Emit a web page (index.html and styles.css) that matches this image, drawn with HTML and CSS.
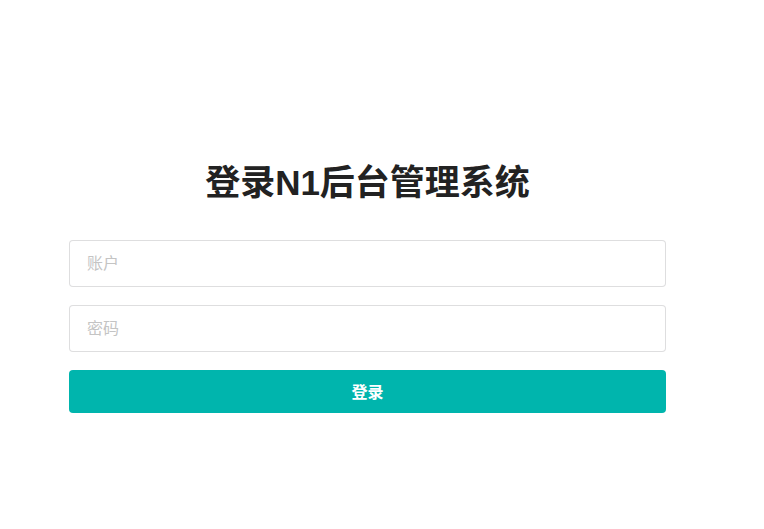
FILE: index.html
```html
<!DOCTYPE html>
<html lang="zh-CN">
<head>
  <meta charset="UTF-8" />
  <title>登录N1后台管理系统</title>
  <link rel="stylesheet" href="styles.css">
</head>
<body>
  <div class="login-box">
    <h1 class="login-title">登录N1后台管理系统</h1>
    <form class="login-form">
      <input class="field" type="text" placeholder="账户">
      <input class="field" type="password" placeholder="密码">
      <button class="submit" type="button">登录</button>
    </form>
  </div>
</body>
</html>
```

FILE: styles.css
```css
body {
  margin: 0;
  background: #fff;
  font-family: "Liberation Sans", "Noto Sans CJK SC", sans-serif;
}

.login-box {
  width: 597px;
  margin-left: 69px;
  padding-top: 160px;
}

.login-title {
  margin: 0 0 34px;
  font-size: 35px;
  line-height: 46px;
  font-weight: bold;
  text-align: center;
  color: #222;
}

.login-form {
  display: flex;
  flex-direction: column;
  gap: 18px;
}

.field {
  height: 47px;
  box-sizing: border-box;
  padding: 0 17px;
  border: 1px solid rgba(34, 36, 38, 0.15);
  border-radius: 4px;
  font-family: inherit;
  font-size: 16px;
  color: #333;
  outline: none;
}

.field::placeholder {
  color: #c4c4c4;
}

.submit {
  height: 43px;
  padding-bottom: 2px;
  border: 0;
  border-radius: 4px;
  background: #00b5ad;
  color: #fff;
  font-family: inherit;
  font-size: 16px;
  font-weight: bold;
}
```
